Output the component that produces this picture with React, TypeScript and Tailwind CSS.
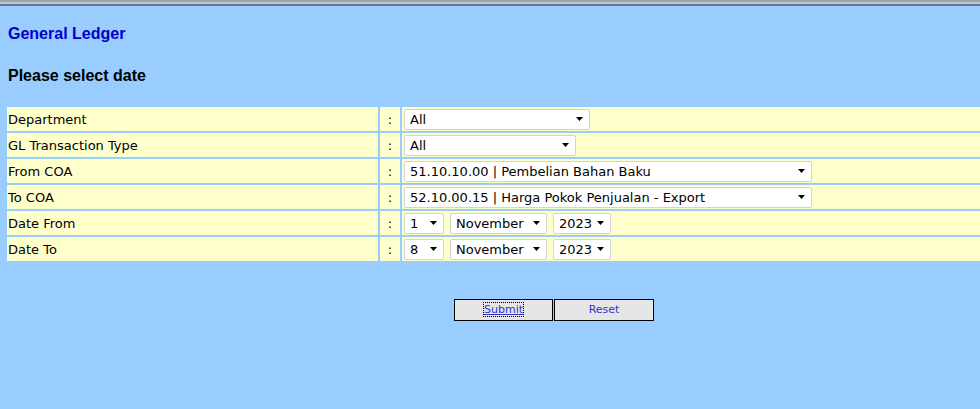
import React from "react";

type Row = {
    label: string;
    selects: { value: string; width: string }[];
};

const rows: Row[] = [
    { label: "Department", selects: [{ value: "All", width: "w-[186px]" }] },
    { label: "GL Transaction Type", selects: [{ value: "All", width: "w-[172px]" }] },
    { label: "From COA", selects: [{ value: "51.10.10.00 | Pembelian Bahan Baku", width: "w-[408px]" }] },
    { label: "To COA", selects: [{ value: "52.10.00.15 | Harga Pokok Penjualan - Export", width: "w-[408px]" }] },
    {
        label: "Date From",
        selects: [
            { value: "1", width: "w-[40px]" },
            { value: "November", width: "w-[97px]" },
            { value: "2023", width: "w-[58px]" },
        ],
    },
    {
        label: "Date To",
        selects: [
            { value: "8", width: "w-[40px]" },
            { value: "November", width: "w-[97px]" },
            { value: "2023", width: "w-[58px]" },
        ],
    },
];

function FakeSelect({ value, width }: { value: string; width: string }) {
    return (
        <div
            className={`${width} h-[21px] flex items-center justify-between pl-[5px] pr-[6px] bg-white border border-[#d4d4d4] rounded-[2px] text-black`}
        >
            <span className="whitespace-nowrap leading-none">{value}</span>
            <svg width="7" height="4" viewBox="0 0 7 4" className="shrink-0">
                <path d="M0 0 H7 L3.5 4 Z" fill="#000" />
            </svg>
        </div>
    );
}

export default function App() {
    return (
        <div className="min-h-screen w-full bg-[#99ccff] overflow-hidden">
            {/* top frame edge */}
            <div className="h-[2px] bg-[#a2a2a2]"></div>
            <div className="h-[2px] bg-[#b4c9de]"></div>
            <div className="h-[2px] bg-[#66778a]"></div>

            <div className="px-[8px] pt-[19px] font-['Liberation_Sans',Arial,sans-serif] font-bold text-[16px] leading-[18px]">
                <h1 className="text-[#0000cc]">General Ledger</h1>
                <h2 className="mt-[24px] text-black">Please select date</h2>
            </div>

            <table className="mt-[20px] ml-[5px] w-[1000px] border-separate border-spacing-[2px] font-['DejaVu_Sans',Verdana,sans-serif] text-[13px]">
                <tbody>
                    {rows.map((row) => (
                        <tr key={row.label} className="h-[24px]">
                            <td className="w-[371px] bg-[#ffffcc] px-[1px] pt-[2px] text-black whitespace-nowrap">{row.label}</td>
                            <td className="w-[20px] bg-[#ffffcc] pt-[2px] text-center text-black">:</td>
                            <td className="bg-[#ffffcc] pl-[2px] py-[1px]">
                                <div className="flex gap-[6px]">
                                    {row.selects.map((s, i) => (
                                        <FakeSelect key={i} value={s.value} width={s.width} />
                                    ))}
                                </div>
                            </td>
                        </tr>
                    ))}
                </tbody>
            </table>

            <div className="flex gap-[1px] pl-[454px] mt-[36px] font-['DejaVu_Sans',Verdana,sans-serif] text-[11px]">
                <button className="w-[99px] h-[22px] bg-[#e6e6e6] border border-black text-[#3333cc]">
                    <span className="underline outline-1 outline-dotted outline-black">Submit</span>
                </button>
                <button className="w-[100px] h-[22px] bg-[#e6e6e6] border border-black text-[#3333cc]">Reset</button>
            </div>
        </div>
    );
}
